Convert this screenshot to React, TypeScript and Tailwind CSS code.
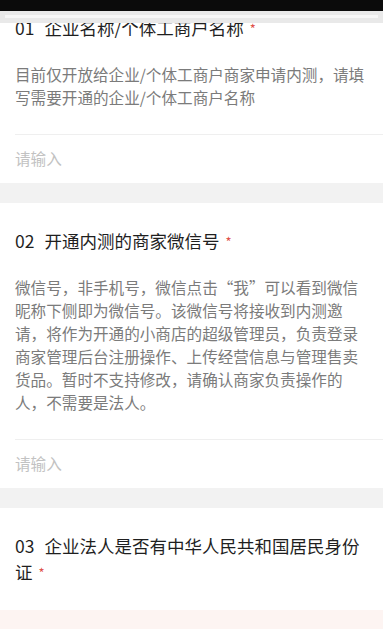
const font = { fontFamily: '"Noto Sans CJK SC", "Noto Sans", sans-serif' };

const Title = ({ no, text }: { no: string; text: string }) => (
  <h2 className="text-[17.5px] leading-[26px] text-[#1f1f1f] pr-[15px]">
    <span className="mr-[10px]">{no}</span>
    {text}
    <span className="ml-[6px] inline-block text-[13px] leading-none text-[#e0524a] -translate-y-[1px]">*</span>
  </h2>
);

const Question = ({ no, title, desc }: { no: string; title: string; desc?: string }) => (
  <section className="bg-white pl-[15px] pt-[25px]">
    <Title no={no} text={title} />
    {desc && (
      <>
        <p className="mt-[22px] pr-[15px] text-[15.6px] leading-[23px] text-[#7b7b7b]">{desc}</p>
        <div className="mt-[25px] border-t border-[#efefef]" />
        <div className="h-[48px] flex items-center text-[15.6px] text-[#c2c2c2]">请输入</div>
      </>
    )}
  </section>
);

export default function App() {
  return (
    <div className="relative w-[383px] h-[629px] overflow-hidden bg-white" style={font}>
      <div className="-mt-[10px]">
        <Question
          no="01"
          title="企业名称/个体工商户名称"
          desc="目前仅开放给企业/个体工商户商家申请内测，请填写需要开通的企业/个体工商户名称"
        />
        <div className="h-[20px] bg-[#f2f2f2]" />
        <Question
          no="02"
          title="开通内测的商家微信号"
          desc="微信号，非手机号，微信点击“我”可以看到微信昵称下侧即为微信号。该微信号将接收到内测邀请，将作为开通的小商店的超级管理员，负责登录商家管理后台注册操作、上传经营信息与管理售卖货品。暂时不支持修改，请确认商家负责操作的人，不需要是法人。"
        />
        <div className="h-[20px] bg-[#f2f2f2]" />
        <Question no="03" title="企业法人是否有中华人民共和国居民身份证" />
        <div className="mt-[25px] h-[60px] bg-[#fdf4f2]" />
      </div>

      {/* status bar + scroll shadow lying over the content */}
      <div className="absolute left-0 right-0 top-0">
        <div className="h-[11px] bg-[#0b0b0b]" />
        <div className="h-[12px] bg-[#e9e9e9] pt-[4px]">
          <div className="mx-[5px] h-[3px] bg-[#f7f7f7]" />
        </div>
      </div>
    </div>
  );
}
